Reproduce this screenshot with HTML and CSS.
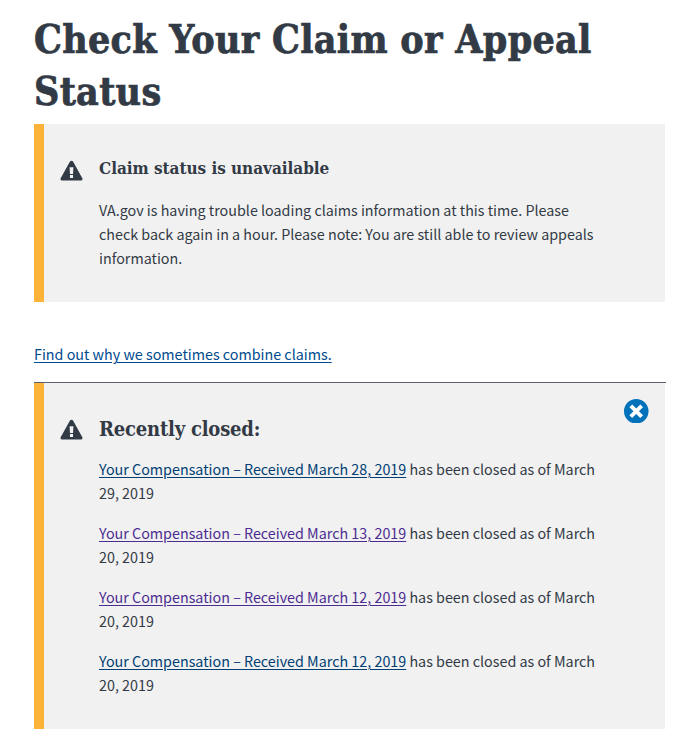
FILE: index.html
```html
<!DOCTYPE html>
<html lang="en">
<head>
<meta charset="utf-8">
<title>Check Your Claim or Appeal Status</title>
<link rel="stylesheet" href="styles.css">
</head>
<body>
<main class="page">
  <h1 class="title">Check Your Claim or Appeal<br>Status</h1>
  <section class="alert alert-unavailable">
    <svg class="warning" viewBox="0 0 24 22" aria-hidden="true"><path fill="#323a45" fill-rule="evenodd" d="M10.4 1.2Q12-.6 13.6 1.2L23.3 18.6Q24 21 21.7 21H2.3Q0 21 .7 18.6ZM10 7L10.4 14H13.6L14 7ZM10.4 15.3V18.3H13.6V15.3Z"/></svg>
    <div class="alert-body">
      <h2 class="heading">Claim status is unavailable</h2>
      <p class="message">VA.gov is having trouble loading claims information at this time. Please<br>check back again in a hour. Please note: You are still able to review appeals<br>information.</p>
    </div>
  </section>
  <p class="explain"><a class="link" href="#">Find out why we sometimes combine claims.</a></p>
  <div class="claims">
    <section class="alert alert-closed">
      <svg class="warning" viewBox="0 0 24 22" aria-hidden="true"><path fill="#323a45" fill-rule="evenodd" d="M10.4 1.2Q12-.6 13.6 1.2L23.3 18.6Q24 21 21.7 21H2.3Q0 21 .7 18.6ZM10 7L10.4 14H13.6L14 7ZM10.4 15.3V18.3H13.6V15.3Z"/></svg>
      <div class="alert-body">
        <h2 class="heading heading-large">Recently closed:</h2>
        <p class="closed"><a class="link link-hover" href="#">Your Compensation – Received March 28, 2019</a> has been closed as of March<br>29, 2019</p>
        <p class="closed"><a class="link link-visited" href="#">Your Compensation – Received March 13, 2019</a> has been closed as of March<br>20, 2019</p>
        <p class="closed"><a class="link link-visited" href="#">Your Compensation – Received March 12, 2019</a> has been closed as of March<br>20, 2019</p>
        <p class="closed"><a class="link link-hover" href="#">Your Compensation – Received March 12, 2019</a> has been closed as of March<br>20, 2019</p>
      </div>
      <button class="close" aria-label="Close"><svg class="close-icon" viewBox="0 0 24 24" aria-hidden="true"><circle cx="12" cy="12" r="12" fill="#0071bb"/><path d="M8 8L16 16M16 8L8 16" stroke="#fff" stroke-width="3.8" stroke-linecap="square"/></svg></button>
    </section>
  </div>
</main>
</body>
</html>
```
FILE: styles.css
```css
* { box-sizing: border-box; }
body {
  margin: 0;
  background: #fff;
  color: #323a45;
  font: 14.32px/24px "Noto Sans CJK SC", "Open Sans", sans-serif;
}
h1, h2, p { margin: 0; white-space: nowrap; }
.page { padding: 13px 20px 0 34px; }
.title {
  font: bold 39px/52px "DejaVu Serif Condensed", "DejaVu Serif", serif;
  letter-spacing: 0.28px;
  -webkit-text-stroke: 0.7px #323a45;
}
.alert {
  position: relative;
  display: flex;
  width: 631px;
  padding: 26px 0 0 16px;
  border-left: 10px solid #fdb338;
  background: #f1f1f1;
}
.alert-unavailable { height: 178px; margin-top: 7px; }
.alert-closed { height: 346px; }
.warning { flex: none; width: 23px; height: 22px; margin: 10px 16px 0 0; }
.heading {
  height: 48px;
  font: bold 17px/36px "DejaVu Serif Condensed", "DejaVu Serif", serif;
  letter-spacing: -0.04px;
}
.heading-large { font-size: 20px; line-height: 40px; letter-spacing: -0.2px; }
.explain { margin-top: 40px; }
.link {
  color: #004b8e;
  text-decoration: underline;
  text-decoration-thickness: 1px;
  text-underline-offset: 2px;
}
.link-hover { color: #003e73; }
.link-visited { color: #4c2c92; }
.claims { width: 632px; margin-top: 16px; border-top: 1px solid #5b616b; }
.closed { margin-bottom: 16px; }
.close {
  position: absolute;
  top: 15.8px;
  right: 16.4px;
  width: 24.5px;
  height: 24.5px;
  padding: 0;
  border: 0;
  background: none;
}
.close-icon { display: block; width: 24.5px; height: 24.5px; }
```
